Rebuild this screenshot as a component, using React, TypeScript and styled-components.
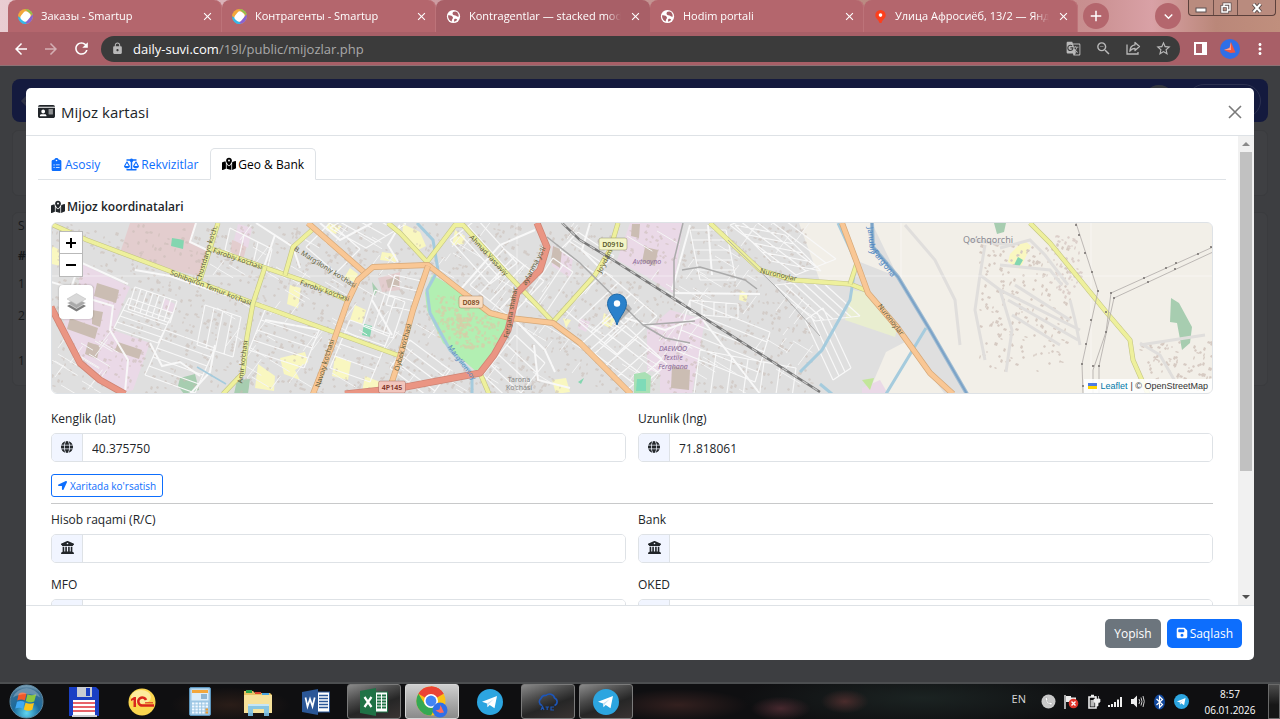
import React, { ReactNode, useId } from "react";
import styled, { createGlobalStyle, css } from "styled-components";
import {
  FaIdCard,
  FaClipboardList,
  FaScaleBalanced,
  FaMapLocationDot,
  FaGlobe,
  FaBuildingColumns,
  FaFloppyDisk,
} from "react-icons/fa6";
import { FaLocationArrow } from "react-icons/fa";
import {
  MdArrowBack,
  MdArrowForward,
  MdRefresh,
  MdLock,
  MdGTranslate,
  MdZoomOut,
  MdStarBorder,
  MdMoreVert,
  MdClose,
  MdAdd,
  MdKeyboardArrowDown,
} from "react-icons/md";

const GlobalStyle = createGlobalStyle`
  *, *::before, *::after { box-sizing: border-box; }
  body { margin: 0; background: #3d3e41; font-family: "Open Sans", "Noto Sans", sans-serif; font-size: 12px; color: #212529; }
  button, input { font: inherit; }
`;

const Screen = styled.div`
  display: flex;
  flex-direction: column;
  height: 100vh;
  overflow: hidden;
`;

/* ---------- browser frame ---------- */

const TabStrip = styled.div`
  display: flex;
  height: 32px;
  padding-left: 8px;
  background: linear-gradient(90deg, #e9cdd2 0, #cf9fa6 30%, #b98a80 70%, #c98f90 85%, #d9a1a6 90%, #ba8779 95%, #c08f7d 100%);
`;

const TabItem = styled.div<{ $active?: boolean }>`
  display: flex;
  align-items: center;
  flex: 0 1 214px;
  min-width: 0;
  gap: 8px;
  padding: 0 8px 0 10px;
  border-radius: 8px 8px 0 0;
  color: #fff;
  background: ${(p) => (p.$active ? "#a85f67" : "#b4666d")};
  box-shadow: ${(p) => (p.$active ? "none" : "inset -1px 0 0 #bd7379")};
`;

const TabTitle = styled.span`
  flex: 1;
  overflow: hidden;
  white-space: nowrap;
  font-size: 11px;
  line-height: 16px;
  mask-image: linear-gradient(90deg, #000 90%, transparent);
`;

const PlainButton = styled.button`
  display: inline-flex;
  align-items: center;
  justify-content: center;
  padding: 0;
  border: 0;
  color: inherit;
  background: none;
`;

const RoundButton = styled(PlainButton)`
  align-self: center;
  width: 26px;
  height: 26px;
  margin-left: 5px;
  border-radius: 50%;
  color: #fff;
  background: #b4666d;
`;

const StripSpacer = styled.div`
  flex: 1;
`;

const WindowButtons = styled.div`
  display: flex;
  align-self: flex-start;
  height: 16px;
  margin: 0 4px 0 7px;
  border: 1px solid #5c413c;
  border-top: 0;
  border-radius: 0 0 4px 4px;
  background: #b98b7e;
`;

const WindowButton = styled(PlainButton)<{ $wide?: boolean }>`
  width: ${(p) => (p.$wide ? 38 : 24)}px;
  & + & { border-left: 1px solid #6e4f49; }
`;

const Toolbar = styled.div`
  display: flex;
  align-items: center;
  flex: none;
  height: 34px;
  padding: 0 10px;
  border-bottom: 1px solid #8d7275;
  color: #fff;
  background: #a85f67;
`;

const NavButton = styled(PlainButton)<{ $dim?: boolean }>`
  width: 22px;
  height: 26px;
  margin-right: 8px;
  opacity: ${(p) => (p.$dim ? 0.5 : 1)};
`;

const AddressBar = styled.div`
  display: flex;
  align-items: center;
  flex: 1;
  height: 26px;
  margin-left: 1px;
  padding: 0 8px 0 10px;
  border-radius: 13px;
  color: #b9b9b9;
  background: #3b3b3b;
`;

const Address = styled.p`
  flex: 1;
  margin: 0 0 0 9px;
  font-size: 13px;
  color: #a9a9a9;
  b { font-weight: 400; color: #fff; }
`;

const BarIcon = styled(PlainButton)`
  width: 18px;
  margin-left: 12px;
`;

const ToolIcon = styled(PlainButton)`
  width: 20px;
  margin-left: 10px;
`;

/* ---------- page behind the dialog ---------- */

const Viewport = styled.main`
  position: relative;
  flex: 1;
  min-height: 0;
  padding: 13px 12px;
  overflow: hidden;
  background: #3d3e41;
`;

const DimNavbar = styled.div`
  display: flex;
  align-items: center;
  height: 43px;
  padding: 0 7px;
  margin-bottom: 8px;
  border-radius: 8px;
  color: #2f3246;
  background: #141a3e;
`;

const DimAvatar = styled.span`
  width: 32px;
  height: 32px;
  margin-right: 12px;
  border-radius: 50%;
  background: #34373f;
`;

const DimPill = styled.span`
  width: 74px;
  height: 34px;
  border: 1px solid #2c3150;
  border-radius: 17px;
`;

const DimPanel = styled.div<{ $height: number }>`
  height: ${(p) => p.$height}px;
  margin-bottom: 16px;
  border: 1px solid #3a3b3e;
  border-radius: 6px;
  background: #3f4043;
`;

const DimRows = styled.div`
  display: grid;
  grid-template-rows: 24px 36px 20px 44px 46px;
  align-items: center;
  padding: 0 5px;
  color: #17191b;
`;

const Overlay = styled.div`
  position: absolute;
  inset: 0;
  display: flex;
  padding: 22px 26px;
`;

/* ---------- dialog ---------- */

const Dialog = styled.section`
  display: flex;
  flex-direction: column;
  flex: 1;
  min-width: 0;
  border-radius: 5px;
  background: #fff;
  overflow: hidden;
`;

const DialogHeader = styled.header`
  display: flex;
  align-items: center;
  flex: none;
  gap: 6px;
  height: 48px;
  padding: 0 11px 0 12px;
  border-bottom: 1px solid #dee2e6;
`;

const DialogTitle = styled.h1`
  flex: 1;
  margin: 0;
  font-size: 15px;
  font-weight: 400;
`;

const DialogMain = styled.div`
  display: flex;
  flex: 1;
  min-height: 0;
`;

const DialogBody = styled.div`
  flex: 1;
  min-width: 0;
  padding: 12px;
  overflow-y: auto;
  scrollbar-width: none;
`;

const ScrollTrack = styled.div`
  display: flex;
  flex-direction: column;
  align-items: center;
  width: 16px;
  background: #f1f1f1;
  color: #505050;
`;

const ScrollThumb = styled.div`
  width: 12px;
  height: 68%;
  background: #c1c1c1;
`;

const ScrollArrow = styled.svg`
  flex: none;
  width: 16px;
  height: 16px;
`;

const FormTabs = styled.nav`
  display: flex;
  height: 32px;
  border-bottom: 1px solid #dee2e6;
`;

const FormTab = styled.a<{ $active?: boolean }>`
  display: flex;
  align-items: center;
  gap: 2px;
  height: 32px;
  padding: 0 11px;
  border: 1px solid transparent;
  border-radius: 5px 5px 0 0;
  color: #0d6efd;
  text-decoration: none;
  ${(p) =>
    p.$active &&
    css`
      color: #000;
      background: #fff;
      border-color: #dee2e6 #dee2e6 #fff;
    `}
`;

const Pane = styled.div`
  padding: 17px 13px;
`;

const SectionTitle = styled.h2`
  display: flex;
  align-items: center;
  gap: 2px;
  margin: 0 0 5px;
  font-size: 12px;
  line-height: 20px;
  font-weight: 600;
`;

const MapFrame = styled.div`
  position: relative;
  height: 172px;
  margin-bottom: 15px;
  border: 1px solid #dee2e6;
  border-radius: 6px;
  overflow: hidden;
`;

const MapSvg = styled.svg`
  display: block;
  width: 100%;
  height: 100%;
`;

const MapControls = styled.div`
  position: absolute;
  top: 8px;
  left: 7px;
  display: flex;
  flex-direction: column;
  align-items: flex-start;
`;

const ZoomButton = styled.button`
  width: 24px;
  height: 23px;
  padding: 0;
  border: 1px solid #b9b9b9;
  color: #000;
  background: #fff;
  display: flex;
  align-items: center;
  justify-content: center;
  & + & { border-top: 0; }
`;

const LayersButton = styled.button`
  display: flex;
  align-items: center;
  justify-content: center;
  width: 34px;
  height: 34px;
  margin-top: 8px;
  padding: 0;
  border: 0;
  border-radius: 4px;
  background: #fff;
  box-shadow: 0 0 2px rgba(0, 0, 0, 0.3);
`;

const Attribution = styled.div`
  position: absolute;
  right: 0;
  bottom: 0;
  display: flex;
  align-items: center;
  gap: 3px;
  height: 14px;
  padding: 0 4px;
  font-family: "Liberation Sans", Arial, sans-serif;
  font-size: 9px;
  color: #333;
  background: rgba(255, 255, 255, 0.85);
  a { color: #0078a8; text-decoration: none; }
`;

const FieldGrid = styled.div`
  display: grid;
  grid-template-columns: 1fr 1fr;
  gap: 12px;
`;

const FieldLabel = styled.label`
  display: block;
  margin-bottom: 4px;
  line-height: 20px;
`;

const InputGroup = styled.div`
  display: flex;
  height: 29px;
  border: 1px solid #dee2e6;
  border-radius: 5px;
  overflow: hidden;
`;

const Addon = styled.span`
  display: flex;
  align-items: center;
  justify-content: center;
  width: 31px;
  padding-bottom: 2px;
  border-right: 1px solid #dee2e6;
  background: #f1f5ff;
`;

const TextInput = styled.input`
  flex: 1;
  min-width: 0;
  padding: 1px 9px 0;
  border: 0;
  outline: 0;
  color: #212529;
`;

const OutlineButton = styled.button`
  display: flex;
  align-items: center;
  gap: 3px;
  height: 23px;
  margin-top: 12px;
  padding: 0 6px;
  border: 1px solid #0d6efd;
  border-radius: 3px;
  font-size: 10px;
  color: #0d6efd;
  background: #fff;
`;

const Divider = styled.hr`
  height: 1px;
  margin: 6px 0;
  border: 0;
  background: #c8c9ca;
`;

const DialogFooter = styled.footer`
  display: flex;
  align-items: center;
  justify-content: flex-end;
  flex: none;
  gap: 6px;
  height: 55px;
  padding: 0 12px;
  border-top: 1px solid #dee2e6;
`;

const SolidButton = styled.button<{ $primary?: boolean }>`
  display: flex;
  align-items: center;
  gap: 2px;
  height: 29px;
  padding: 0 9px;
  border: 0;
  border-radius: 5px;
  color: #fff;
  background: ${(p) => (p.$primary ? "#0d6efd" : "#6c757d")};
`;

/* ---------- taskbar ---------- */

const Taskbar = styled.footer`
  display: flex;
  align-items: stretch;
  flex: none;
  height: 37px;
  border-top: 2px solid #4c4e50;
  color: #fff;
  background: radial-gradient(ellipse 60px 18px at 18% 60%, #2a1d18, transparent),
    radial-gradient(ellipse 70px 16px at 53% 60%, #33201f, transparent),
    radial-gradient(ellipse 30px 12px at 61% 70%, #46282e, transparent),
    radial-gradient(ellipse 24px 12px at 66% 50%, #4a2c2c, transparent),
    radial-gradient(ellipse 180px 30px at 72% 40%, #1b2322, transparent),
    #0f0f11;
`;

const StartButton = styled(PlainButton)`
  width: 53px;
`;

const TaskSlot = styled(PlainButton)<{ $look?: "open" | "front" }>`
  width: 54px;
  margin-left: 4px;
  border-radius: 3px;
  ${(p) =>
    p.$look === "open" &&
    css`
      border: 1px solid #7b7b7b;
      background: linear-gradient(160deg, #8a8a8a 0, #4b4b4b 35%, #262626 60%, #3a3433 100%);
    `}
  ${(p) =>
    p.$look === "front" &&
    css`
      border: 1px solid #d6d6d6;
      background: linear-gradient(180deg, #cfcfcf, #a5a5a5 60%, #8a8a8a);
    `}
`;

const Tray = styled.div`
  display: flex;
  align-items: center;
  gap: 7px;
`;

const Language = styled.span`
  margin: 0 8px 6px 0;
  font-size: 11px;
  color: #d8d8d8;
`;

const Clock = styled.time`
  width: 60px;
  margin: 0 8px 0 4px;
  text-align: center;
  font-size: 10px;
  line-height: 16px;
`;

const ShowDesktop = styled(PlainButton)`
  width: 12px;
  border: 1px solid #6a6a6a;
  background: linear-gradient(180deg, #4d4d4d, #161616 60%);
`;

/* ---------- small drawings ---------- */

const SmartupIcon = () => {
  const id = useId();
  return (
    <svg width="15" height="15" viewBox="0 0 15 15">
      <clipPath id={id}><circle cx="7.500" cy="7.500" r="7.500" /></clipPath>
      <g clipPath={`url(#${id})`}>
        <rect width="15" height="15" fill="#f3a73b" />
        <path d="M7 0H15V7Z" fill="#8cc152" />
        <path d="M15 5V15H5Z" fill="#8a63d0" />
        <path d="M0 7L8 15H0Z" fill="#2c9fe0" />
        <path d="M0 9L3 8L9 15H2Z" fill="#39b7e8" />
        <rect x="3.500" y="2.500" width="8" height="10" rx="3" fill="#fff" transform="rotate(38 7.500 7.500)" />
      </g>
    </svg>
  );
};

const WorldIcon = () => (
  <svg width="15" height="15" viewBox="0 0 15 15">
    <circle cx="7.500" cy="7.500" r="6.600" fill="#fff" />
    <path d="M2 6.500C4 6 6.500 7 7 8.500C7.300 9.700 5.500 10 5.800 12.600C3.600 12 2 9.500 2 6.500ZM7 3C8 2.400 10 2 11.300 3.300C12 4.500 12.800 5.500 12.700 7.400C11.500 8.300 10.700 6.600 9.300 6.400C8 6.200 6.400 5.600 6.500 4.400ZM8.200 10.200C9.400 9.600 10.600 9.800 11.200 10.700C10.400 11.900 9.200 12.400 8 12.500Z" fill="#a85f67" />
  </svg>
);

const PinIcon = () => (
  <svg width="13" height="15" viewBox="0 0 13 15">
    <path d="M6.500 1a5.200 5.200 0 0 1 5.200 5.200c0 3-3 3.500-4.200 7.800h-2C4.300 9.700 1.300 9.200 1.300 6.200A5.200 5.200 0 0 1 6.500 1Z" fill="#fc3f1d" />
    <circle cx="6.500" cy="6.100" r="1.800" fill="#fff" />
  </svg>
);

const ShareIcon = () => (
  <svg width="16" height="15" viewBox="0 0 16 15" fill="none" stroke="currentColor" strokeWidth="1.300">
    <path d="M2 3.500V13H13V11" />
    <path d="M10 1.500L14.500 5.500L10 9.500V7.300C7.500 7.300 6 8.300 4.800 10.200C5 6.600 6.800 4.200 10 3.800Z" strokeLinejoin="round" />
  </svg>
);

const ProfileIcon = () => (
  <svg width="20" height="20" viewBox="0 0 20 20">
    <circle cx="10" cy="10" r="10" fill="#2f6fe8" />
    <path d="M11 3L15.500 13.500L10.500 14L4 11L9.500 9Z" fill="#f0563f" />
    <path d="M11 3L11 11L4 11L9.500 9Z" fill="#ffa08f" />
  </svg>
);

const TelegramIcon = ({ size }: { size: number }) => (
  <svg width={size} height={size} viewBox="0 0 26 26">
    <circle cx="13" cy="13" r="13" fill="#2ca5e0" />
    <path d="M5 12.800L20 7L17.500 19.300L12.700 15.900L10.500 18.200L10 14.500Z" fill="#fff" />
    <path d="M10 14.500L16.800 10L11.700 15.200L10.500 18.200Z" fill="#c3dff0" />
  </svg>
);

const StartIcon = () => {
  const id = useId();
  return (
    <svg width="35" height="35" viewBox="0 0 36 36">
      <radialGradient id={id} cx="0.500" cy="0.850" r="0.900">
        <stop offset="0" stopColor="#5fd6f2" />
        <stop offset="0.450" stopColor="#1c6a9c" />
        <stop offset="0.800" stopColor="#3c6f92" />
        <stop offset="1" stopColor="#a8c3d2" />
      </radialGradient>
      <circle cx="18" cy="18" r="17" fill={`url(#${id})`} stroke="#5f8aa3" />
      <path d="M10 10C13 8 15.500 8.500 18 10L16.300 17C14 15.600 11.300 15.300 8.500 17Z" fill="#f0592a" />
      <path d="M19 10.500C22 12 24.500 12 28 10.500L26 18C23 19.300 20.300 19 17.300 17.600Z" fill="#8cc63f" />
      <path d="M8.200 18.300C11 17 13.500 17 16 18.600L14.300 25.500C12 24 9.500 24 6.500 25.300Z" fill="#3fa9f5" />
      <path d="M17 19.200C20 20.500 22.700 20.700 25.700 19.500L24 26.500C21 28 18.300 27.700 15.200 26.200Z" fill="#fcc419" />
      <path d="M4 14A15 15 0 0 1 32 14C25 9 11 9 4 14Z" fill="#fff" opacity="0.250" />
    </svg>
  );
};

const FloppyIcon = () => (
  <svg width="30" height="31" viewBox="0 0 30 31">
    <path d="M0 1H27L30 4V30H0Z" fill="#1a3fc4" />
    <path d="M8 1H23V11H8Z" fill="#c9ccd2" />
    <path d="M17 2H21V10H17Z" fill="#1a3fc4" />
    <rect x="4" y="14" width="22" height="16" fill="#fff" />
    <path d="M4 17H26M4 21H26M4 25H26" stroke="#e0303a" strokeWidth="1.300" />
    <rect x="3" y="29" width="25" height="2" fill="#c9ccd2" />
  </svg>
);

const OneCIcon = () => (
  <svg width="28" height="28" viewBox="0 0 28 28">
    <circle cx="14" cy="14" r="13.500" fill="#fbd64f" />
    <ellipse cx="13" cy="9" rx="10" ry="7" fill="#fdeb9c" />
    <path d="M3 11L6 9H8V19H5.500V12L3 13Z" fill="#d9261c" />
    <path d="M18 12A4 4 0 1 0 15 17.500H26" fill="none" stroke="#d9261c" strokeWidth="2.600" />
    <path d="M17 14.800H25" stroke="#d9261c" strokeWidth="1" />
  </svg>
);

const CalculatorIcon = () => (
  <svg width="22" height="29" viewBox="0 0 22 29">
    <rect x="0.500" y="0.500" width="21" height="28" rx="1.500" fill="#9cc6e4" stroke="#5c95bd" />
    <rect x="2.500" y="2.500" width="17" height="11" fill="#dceefa" />
    <rect x="3" y="3" width="16" height="3" fill="#f3a73b" />
    <rect x="12" y="7" width="6" height="5" fill="#8fb6d2" />
    {[0, 1, 2, 3].map((r) =>
      [0, 1, 2, 3, 4].map((c) => (
        <rect key={`${r}${c}`} x={3 + c * 3.4} y={15.500 + r * 3} width="2.400" height="2" fill={c === 4 && r > 1 ? "#f39c2b" : "#f2f9ff"} />
      )),
    )}
  </svg>
);

const ExplorerIcon = () => (
  <svg width="30" height="28" viewBox="0 0 30 28">
    <path d="M1 3H10L12 5H27L29 7V25H1Z" fill="#e8c363" />
    <path d="M3 2H9V5H3Z" fill="#2fa24b" />
    <path d="M12 4H18V6H12Z" fill="#d9432f" />
    <path d="M19 5H26V8H19Z" fill="#4aa3df" />
    <path d="M1 7H29V25H1Z" fill="#f7e29b" />
    <path d="M5 16H26V28H21V21H10V28H5Z" fill="#7cc3ea" opacity="0.900" />
    <path d="M5 16H26V18H5Z" fill="#c6e6f7" />
  </svg>
);

const WordIcon = () => (
  <svg width="28" height="26" viewBox="0 0 28 26">
    <rect x="15" y="3" width="12.500" height="20" fill="#fff" stroke="#2b5797" />
    <path d="M17 6.500H26M17 9.500H26M17 12.500H26M17 15.500H26M17 18.500H26" stroke="#2b5797" strokeWidth="1.300" />
    <path d="M0 3L16 0V26L0 23Z" fill="#2b5797" />
    <path d="M3.500 8.500L5.500 17.500L8 10L10.500 17.500L12.700 8.500" fill="none" stroke="#fff" strokeWidth="1.700" />
  </svg>
);

const ExcelIcon = () => (
  <svg width="28" height="28" viewBox="0 0 28 28">
    <rect x="15" y="4" width="12.500" height="20" fill="#fff" stroke="#1f7246" />
    <path d="M17 7.500H26M17 10.500H26M17 13.500H26M17 16.500H26M17 19.500H26" stroke="#1f7246" strokeWidth="2" strokeDasharray="4 1" />
    <path d="M0 3L16 0V28L0 25Z" fill="#1f7246" />
    <path d="M4.500 9L11.500 19M11.500 9L4.500 19" fill="none" stroke="#fff" strokeWidth="2.200" />
  </svg>
);

const ChromeIcon = () => (
  <svg width="32" height="32" viewBox="0 0 32 32">
    <circle cx="15" cy="15" r="14.500" fill="#fbc116" />
    <path d="M15 15L2.400 7.700A14.500 14.500 0 0 1 27.600 7.700Z" fill="#ea4335" />
    <path d="M15 .5A14.500 14.500 0 0 1 27.600 8H15Z" fill="#ea4335" />
    <path d="M2.400 7.700A14.500 14.500 0 0 0 15 29.500L21 18.500L9 18.500Z" fill="#34a853" />
    <circle cx="15" cy="15" r="7" fill="#fff" />
    <circle cx="15" cy="15" r="5.400" fill="#4285f4" />
    <circle cx="24" cy="24" r="7.500" fill="#2f6fe8" />
    <path d="M24.500 19L28 26.500L24 27L19.500 24.500L23.500 23.500Z" fill="#ff6b5a" />
  </svg>
);

const CloudIcon = () => (
  <svg width="22" height="18" viewBox="0 0 22 18" fill="none" stroke="#1d56b8" strokeWidth="1.600">
    <path d="M5 12.500A4 4 0 0 1 4 5.500A4.500 4.500 0 0 1 9 2.500A5 5 0 0 1 17.500 5A4 4 0 0 1 17.500 12.500" />
    <path d="M4 17L5.500 13.500L7 17M8.500 14H12M10.200 14V17M17 14H14V17H17" strokeWidth="1.200" />
  </svg>
);

const PhoneTray = () => (
  <svg width="15" height="15" viewBox="0 0 15 15">
    <circle cx="7.500" cy="7.500" r="7" fill="#c9c9c9" />
    <path d="M4.500 3.500C3.500 6.500 7 11 10.500 11L11.500 9.500L9.500 8.300L8.600 9C7.300 8.500 6.300 7.300 6 6.200L6.800 5.400L5.800 3.300Z" fill="#fff" stroke="#999" strokeWidth="0.500" />
  </svg>
);

const FlagTray = () => (
  <svg width="16" height="15" viewBox="0 0 16 15">
    <path d="M2 1V15" stroke="#eee" strokeWidth="1.400" />
    <path d="M3 2H8V3.500H13V9H8V8H3Z" fill="#eee" />
    <circle cx="10.500" cy="9.500" r="4.800" fill="#e0352b" />
    <path d="M8.500 7.500L12.500 11.500M12.500 7.500L8.500 11.500" stroke="#fff" strokeWidth="1.400" />
  </svg>
);

const BatteryTray = () => (
  <svg width="15" height="15" viewBox="0 0 15 15">
    <path d="M3 3H10V14H3ZM5 1.500H8" fill="none" stroke="#eee" strokeWidth="1.600" />
    <path d="M4.500 6H8.500V12.500H4.500Z" fill="#bbb" />
    <path d="M9.500 2V5M12.500 2V5M8 5H14V8L12 9V12H10V9L8 8Z" fill="#eee" stroke="#eee" strokeWidth="0.700" />
  </svg>
);

const SignalTray = () => (
  <svg width="15" height="15" viewBox="0 0 15 15" fill="#eee">
    <path d="M0 11H2V13H0ZM3 10H5V13H3ZM6 8H8V13H6ZM9 5.500H11V13H9ZM12 3H14V13H12Z" />
  </svg>
);

const VolumeTray = () => (
  <svg width="15" height="15" viewBox="0 0 15 15">
    <path d="M1 5H3.500L7 1.500V13.500L3.500 10H1Z" fill="#eee" />
    <path d="M9 5Q10.500 7.500 9 10M11 3.500Q13 7.500 11 11.500M13 2Q15.500 7.500 13 13" fill="none" stroke="#ccc" />
  </svg>
);

const BluetoothTray = () => (
  <svg width="15" height="16" viewBox="0 0 15 16">
    <ellipse cx="7.500" cy="8" rx="5.500" ry="7.500" fill="#10479c" />
    <path d="M4.500 5L10.500 10.500L7.500 13.500V2.500L10.500 5.500L4.500 11" fill="none" stroke="#fff" strokeWidth="1.200" />
  </svg>
);

const LayersIcon = () => (
  <svg width="21" height="21" viewBox="0 0 21 21">
    <path d="M1 14L10.500 19.500L20 14L10.500 9Z" fill="#7d7d7d" />
    <path d="M1 11L10.500 16.500L20 11L10.500 6Z" fill="#a9a9a9" stroke="#fff" strokeWidth="0.500" />
    <path d="M1 7L10.500 12.500L20 7L10.500 1.500Z" fill="#d9d9d9" stroke="#bbb" strokeWidth="0.500" />
  </svg>
);

/* ---------- city map ---------- */

const random = (seed: number) => () => {
  seed = (seed * 16807) % 2147483647;
  return seed / 2147483647;
};

const houses = (seed: number, count: number, x: number, y: number, w: number, h: number) => {
  const next = random(seed);
  let d = "";
  for (let i = 0; i < count; i++) {
    const px = Math.round(x + next() * w);
    const py = Math.round(y + next() * h);
    const a = 1 + Math.round(next() * 2);
    const b = 1 + Math.round(next() * 2);
    d += `M${px} ${py}l${a} 1l-1 ${b}l-${a} -1z`;
  }
  return d;
};

/* Short lanes that follow the two main street directions. */
const lanes = (seed: number, count: number, x: number, y: number, w: number, h: number) => {
  const next = random(seed);
  let d = "";
  for (let i = 0; i < count; i++) {
    const px = Math.round(x + next() * w);
    const py = Math.round(y + next() * h);
    const n = 8 + next() * 18;
    d += next() > 0.5 ? `M${px} ${py}l${n} ${n * 0.6}` : `M${px} ${py}l${n * 0.6} ${-n * 0.8}`;
  }
  return d;
};

/* A block of parallel streets: start point, street vector, step vector, number of streets. */
const block = (x: number, y: number, ux: number, uy: number, sx: number, sy: number, n: number) => {
  let d = "";
  for (let i = 0; i < n; i++) d += `M${x + i * sx} ${y + i * sy}l${ux} ${uy}`;
  return d + `M${x} ${y}l${sx * (n - 1)} ${sy * (n - 1)}M${x + ux} ${y + uy}l${sx * (n - 1)} ${sy * (n - 1)}`;
};

const streets = [
  block(135, 287, -7, 22, 6, 2, 8),
  block(114, 328, 44, 15, 3, -6, 6),
  block(165, 330, 50, 18, -4, 9, 6),
  block(205, 305, -8, 40, 9, 3, 5),
  block(230, 228, -5, 22, 14, 7, 4),
  block(330, 223, 30, 26, -12, 12, 3),
  block(265, 310, 55, 18, -4, 10, 5),
  block(330, 228, 36, 20, 10, -6, 5),
  block(350, 320, 40, 14, -5, 12, 5),
  block(375, 290, -12, 36, 10, 4, 4),
  block(450, 240, 40, 44, 9, -7, 4),
  block(470, 285, 34, -36, 10, 8, 5),
  block(515, 335, 30, 28, -8, 10, 5),
  block(525, 300, 28, -42, 10, 7, 3),
  block(565, 310, 40, -38, 13, 11, 5),
  block(580, 345, 34, -30, 12, 11, 5),
  block(560, 250, 36, 24, 9, -9, 3),
  block(590, 350, 50, 38, 9, -8, 4),
  block(690, 300, 80, 32, -3, 10, 6),
  block(700, 350, -6, 44, 16, 3, 7),
  block(730, 225, 66, 50, 10, -4, 5),
  block(735, 225, 50, 10, 9, 9, 5),
  block(690, 230, 36, 0, 2, 10, 6),
  block(775, 285, 40, 36, 9, -1, 6),
  block(805, 320, 28, 60, 6, -4, 4),
  block(690, 300, 0, 14, 12, 1, 5),
  block(410, 340, 40, 30, -5, 7, 5),
  block(395, 275, 26, 6, -3, 10, 4),
].join("");

const ruralRoads =
  "M905 225L935 260L955 300L960 345M985 245L980 275L1000 290L1012 330L1006 372M1000 248L1030 240L1045 255L1068 285M1000 290L1080 330M1008 300L1078 340M1015 285L1070 320M1012 315L1060 345M980 275L975 310L985 360M1000 265L1050 270L1062 285M1140 343L1160 355L1180 390M1140 345L1205 335M1080 345L1075 320L1070 300M970 240L1010 245";

const poly = (fill: string, ...points: string[]) => points.map((p) => <polygon key={p} points={p} fill={fill} />);

const Road = ({ d, kind }: { d: string; kind: "yellow" | "orange" | "red" }) => {
  const look = {
    yellow: ["#c4c584", "#eef09c", 5, 3.800],
    orange: ["#d6a878", "#f9c795", 6, 4.600],
    red: ["#cf8474", "#ea9583", 7, 5.400],
  }[kind] as [string, string, number, number];
  return (
    <g fill="none" strokeLinejoin="round">
      <path d={d} stroke={look[0]} strokeWidth={look[2]} />
      <path d={d} stroke={look[1]} strokeWidth={look[3]} />
    </g>
  );
};

const MapLabel = styled.text<{ $size?: number }>`
  font-family: "Noto Sans", "Open Sans", sans-serif;
  font-size: ${(p) => p.$size ?? 7}px;
  text-anchor: middle;
`;

const labels: { text: string; x: number; y: number; turn?: number; fill?: string; size?: number; italic?: boolean }[] = [
  { text: "Sohibqiron Temur ko‘chasi", x: 210, y: 290, turn: 21 },
  { text: "Farobiy ko‘chasi", x: 237, y: 261, turn: 19 },
  { text: "Farobiy ko‘chasi", x: 324, y: 293, turn: 19 },
  { text: "B. Marg‘iloniy ko‘chasi", x: 324, y: 269, turn: 32 },
  { text: "Chustdaryo ko‘ch.", x: 209, y: 254, turn: -73 },
  { text: "Ahmad Yassaviy", x: 487, y: 257, turn: 47 },
  { text: "Fergana shahar", x: 513, y: 313, turn: -80 },
  { text: "aylanma yo‘li", x: 536, y: 267, turn: -62 },
  { text: "Oybek ko‘chasi", x: 405, y: 348, turn: -75 },
  { text: "Navoiy ko‘chasi", x: 327, y: 364, turn: -73 },
  { text: "Amir ko‘chasi", x: 245, y: 362, turn: -83 },
  { text: "Jo‘ydam", x: 607, y: 262, turn: -63 },
  { text: "Nuronoylar", x: 778, y: 277, turn: 13 },
  { text: "Nuronoylar", x: 889, y: 321, turn: 52 },
  { text: "Avtooyno", x: 647, y: 264, fill: "#8a6a9a", italic: true },
  { text: "DAEWOO", x: 673, y: 351, fill: "#8a6a9a", italic: true },
  { text: "Textile", x: 673, y: 360, fill: "#8a6a9a", italic: true },
  { text: "Ferghana", x: 673, y: 369, fill: "#8a6a9a", italic: true },
  { text: "Tarona", x: 519, y: 382, fill: "#888" },
  { text: "Ko‘chasi", x: 519, y: 390, fill: "#888" },
  { text: "Marg‘ilonsoy", x: 460, y: 364, turn: 53, fill: "#5c8bc0" },
  { text: "Janubiy", x: 869, y: 241, turn: 84, fill: "#4f86c2", size: 8 },
  { text: "Farg‘ona", x: 882, y: 265, turn: 52, fill: "#4f86c2", size: 8 },
  { text: "Qo‘chqorchi", x: 988, y: 243, fill: "#8b8b93", size: 9 },
];

const Shield = ({ x, y, w, text, fill, ink }: { x: number; y: number; w: number; text: string; fill: string; ink: string }) => (
  <g>
    <rect x={x - w / 2} y={y - 6} width={w} height="12" rx="2" fill={fill} stroke={ink} strokeOpacity="0.300" />
    <MapLabel x={x} y={y + 3} fill={ink} fontWeight="600">{text}</MapLabel>
  </g>
);

const pylons: [number, number][] = [
  [1076, 225], [1079, 235], [1085, 253], [1092, 272], [1098, 291], [1091, 320], [1086, 344], [1082, 364], [1083, 386],
  [1211, 247], [1198, 254], [1176, 263], [1166, 268], [1144, 278], [1148, 282], [1111, 293], [1114, 298], [1106, 312],
  [1106, 332], [1099, 366], [1093, 366], [1175, 269],
];

const CityMap = () => (
  <MapSvg viewBox="51 223 1162 170" preserveAspectRatio="xMidYMid slice" role="img" aria-label="Mijoz koordinatalari">
    <rect x="0" y="200" width="1300" height="220" fill="#dfdfdf" />
    {poly("#f2efe8", "799,223 842,223 857,263 853,282 820,281", "872,223 1300,223 1300,400 967,394 930,330 898,277", "842,223 872,223 873,247 898,277 860,262", "886,352 905,342 945,394 868,394")}
    {poly("#e3cdce", "130,223 196,223 191,243 207,250 201,277 158,266 121,250", "232,240 247,245 243,260 230,255", "378,278 400,272 400,290 382,292")}
    {poly("#ead9e7", "80,263 130,287 123,303 113,330 150,343 133,390 125,392 97,383 67,337 62,308 78,300", "630,223 683,223 673,293 647,277 617,260", "647,330 670,310 705,320 692,394 660,394 660,373 647,370", "552,245 573,258 570,278 552,266", "238,224 252,228 248,248 234,240", "580,318 590,322 586,332 578,328", "164,298 175,304 172,314 163,309", "862,388 880,380 888,394 862,394")}
    {poly("#e9eed0", "853,290 868,293 897,330 895,337 845,320")}
    {poly("#f9f7c0", "52,246 60,250 60,266 52,264", "290,285 301,288 298,308 287,304", "328,223 342,226 336,234 326,230", "350,268 358,274 354,282 344,278", "355,305 366,310 362,324 350,320", "280,358 305,352 308,362 295,370 300,380 284,374", "258,364 275,376 274,391 255,388", "335,356 351,362 348,380 332,376", "382,252 396,254 396,262 380,260", "403,224 420,232 426,246 418,250 402,238", "455,230 465,236 464,244 452,245", "552,380 566,378 570,392 556,394", "604,313 616,320 610,328 602,324", "1010,254 1024,240 1031,246 1020,269 1008,262", "365,376 380,382 378,394 362,392", "740,290 748,294 746,302 739,300", "563,318 571,320 566,328")}
    {poly("#83d6b0", "172,238 184,240 183,249 171,246", "364,324 372,326 370,337 362,335", "1018,257 1023,260 1019,267 1014,265", "578,382 584,378 581,384")}
    {poly("#a7cdb0", "180,378 195,374 199,390 184,394 178,386", "237,380 250,379 248,394 234,394", "1171,298 1179,303 1192,327 1190,343 1182,350 1177,323 1170,322", "994,223 1006,223 1004,232 997,234", "372,282 378,290 374,296")}
    <path d="M862 380L874 378L870 390Z" fill="#c2e69a" />
    <path d={houses(11, 2000, 51, 223, 760, 171)} fill="#c9bbb4" opacity="0.550" />
    <path d={houses(5, 200, 980, 240, 90, 130)} fill="#d6cac2" />
    <path d={houses(9, 90, 1140, 340, 72, 50)} fill="#d6cac2" />
    <path d={houses(21, 60, 1050, 235, 30, 60)} fill="#dccfca" />
    {poly("#cbbdb3", "97,283 119,290 116,303 94,296", "70,318 98,328 95,339 67,329", "88,342 100,346 97,359 85,354", "118,342 142,350 139,359 115,351", "92,310 103,312 100,327 92,324", "645,247 658,250 655,266 642,262", "672,366 690,370 689,390 671,388", "553,246 562,250 560,268 551,262", "632,224 640,224 639,238 631,236", "386,280 399,276 399,286 388,288")}
    <path d={lanes(17, 190, 210, 225, 590, 165)} fill="none" stroke="#f4f4f4" />
    <path d={lanes(41, 22, 52, 340, 50, 50)} fill="none" stroke="#f4f4f4" />
    <path d={streets} fill="none" stroke="#f8f8f8" strokeWidth="1.200" />
    <g fill="none" stroke="#f8f8f8" strokeWidth="2">
      <path d="M51 282L71 288L80 262L128 284M60 290L113 306L110 330L128 360L125 392M135 270L170 276L240 300" />
      <path d="M256 223L293 247L300 268M196 223L190 242L207 250M275 235L264 267M150 343L162 366L180 362L200 376M215 345L210 372L190 394" />
      <path d="M534 345L538 380L570 388M590 223L582 250L600 268M673 293L760 294M703 320L760 394M625 318L665 330L705 315" />
      <path d="M400 225L388 245L398 262M320 223L340 240L372 223M265 320L320 330M372 300L392 335" />
      <path d="M460 290L500 245L535 230M515 320L545 350L555 372M690 225L672 290M708 225L712 275" />
    </g>
    {poly("#b2efb2", "432,275 450,285 490,315 507,320 503,337 478,373 443,343 427,310 425,293")}
    <path d={houses(31, 120, 436, 295, 34, 42)} fill="#dcc9a6" opacity="0.700" />
    <path d={houses(37, 110, 456, 312, 42, 34)} fill="#dcc9a6" opacity="0.700" />
    {poly("#a9e0b4", "634,374 645,372 651,376 650,394 634,394")}
    {poly("#7edbb8", "637,379 646,379 646,391 636,391")}
    <path d={ruralRoads} fill="none" stroke="#e0dedc" strokeWidth="3" />
    <path d="M517 223V394M901 223V278M1091 223V394M51 276H1213" stroke="#fff" strokeOpacity="0.450" fill="none" />
    <g fill="none" stroke="#a5cbdd">
      <path d="M417 223L433 240L438 270L427 290L430 313L450 350L472 373L472 394" strokeWidth="3" />
      <path d="M838 223L856 262L850 300L840 318L822 350L800 372" strokeWidth="3" />
      <path d="M926 328L886 394M820 384L832 394" strokeWidth="3" />
      <path d="M197 367L226 384" strokeWidth="1.500" />
      <path d="M872 223L873 247L898 277L930 330L967 394" strokeWidth="4" stroke="#a3bed3" />
      <path d="M872 223L873 247L898 277L930 330L967 394" strokeWidth="2" stroke="#7ba3c8" />
    </g>
    <Road kind="yellow" d="M51 224L87 240L167 270L253 303L400 356" />
    <Road kind="yellow" d="M210 248L263 267L310 283L347 300" />
    <Road kind="yellow" d="M218 223L208 255L200 280" />
    <Road kind="yellow" d="M265 267L253 303L247 337L243 373L223 394" />
    <Road kind="yellow" d="M312 230L293 247L285 275" />
    <Road kind="yellow" d="M388 223L400 233L427 262L455 225L463 225L510 277L553 322" />
    <Road kind="yellow" d="M553 322L595 275L610 250L618 223" />
    <Road kind="yellow" d="M480 373L489 394" />
    <Road kind="yellow" d="M710 223L745 256L760 270L793 280L850 284L868 291" />
    <Road kind="yellow" d="M850 284L857 263" />
    <Road kind="yellow" d="M1030 223L1050 243L1107 313L1130 340L1133 360L1148 394" />
    <Road kind="orange" d="M308 223L365 273" />
    <Road kind="orange" d="M313 394L333 343L347 303L358 280L373 267L428 265L460 290L490 313L510 318L553 323L580 343L631 394" />
    <Road kind="orange" d="M428 266L413 310L400 357L388 394" />
    <Road kind="orange" d="M842 223L857 263L868 293L897 327L930 373L953 394" />
    <Road kind="red" d="M537 223L547 247L540 270L517 293L508 330L494 355L480 373L400 388L345 394" />
    <Road kind="red" d="M51 307L80 363L100 380L125 394" />
    <g fill="none">
      <path d="M547 237L580 263L643 325L670 323L695 321M683 223L674 260L674 297M682 270L700 267L745 280L757 289M643 325L665 338L690 343" stroke="#aaa" strokeWidth="1.500" />
      <path d="M562 223L580 240L613 260L820 392" stroke="#777" strokeWidth="2.400" />
      <path d="M562 223L580 240L613 260L820 392" stroke="#c9c9c9" strokeWidth="1.200" strokeDasharray="6 6" />
      <path d="M728 240L775 286L820 336" stroke="#999" strokeWidth="0.700" />
      <path d="M1076 223L1098 291L1082 364L1083 394M1213 247L1111 293L1106 332L1093 370V394M1213 252L1114 298L1099 366V394" stroke="#aeaaa7" strokeWidth="0.800" />
    </g>
    {pylons.map(([x, y]) => <circle key={`${x}-${y}`} cx={x} cy={y} r="1.100" fill="#7a7572" />)}
    {labels.map((l) => (
      <MapLabel
        key={`${l.text}${l.x}`}
        x={l.x}
        y={l.y}
        $size={l.size}
        fill={l.fill ?? "#5f5f40"}
        transform={l.turn ? `rotate(${l.turn} ${l.x} ${l.y})` : undefined}
        fontStyle={l.italic ? "italic" : "normal"}
      >
        {l.text}
      </MapLabel>
    ))}
    <Shield x={613} y={244} w={28} text="D091b" fill="#f3f4c6" ink="#5a5a2a" />
    <Shield x={471} y={302} w={24} text="D089" fill="#f8dcc0" ink="#7a4a20" />
    <Shield x={392} y={387} w={27} text="4P145" fill="#f2c6bd" ink="#7c2f22" />
    <path d="M618 323L632 309L628 304L620 312Z" fill="#000" opacity="0.200" />
    <path d="M617 325C615 317 607.500 311 607.500 303.500A9.500 9.500 0 0 1 626.500 303.500C626.500 311 619 317 617 325Z" fill="#2a81cb" stroke="#1f6aa8" />
    <circle cx="617" cy="303.500" r="3.200" fill="#fff" />
  </MapSvg>
);

/* ---------- form pieces ---------- */

const Field = ({ label, icon, value }: { label: string; icon: ReactNode; value?: string }) => {
  const id = useId();
  return (
    <div>
      <FieldLabel htmlFor={id}>{label}</FieldLabel>
      <InputGroup>
        <Addon>{icon}</Addon>
        <TextInput id={id} type="text" defaultValue={value} />
      </InputGroup>
    </div>
  );
};

const BrowserTab = ({ icon, title, active }: { icon: ReactNode; title: string; active?: boolean }) => (
  <TabItem $active={active}>
    {icon}
    <TabTitle>{title}</TabTitle>
    <PlainButton aria-label="Close tab"><MdClose size={13} /></PlainButton>
  </TabItem>
);

export default function App() {
  return (
    <Screen>
      <GlobalStyle />
      <TabStrip>
        <BrowserTab icon={<SmartupIcon />} title="Заказы - Smartup" />
        <BrowserTab icon={<SmartupIcon />} title="Контрагенты - Smartup" />
        <BrowserTab icon={<WorldIcon />} title="Kontragentlar — stacked moda" active />
        <BrowserTab icon={<WorldIcon />} title="Hodim portali" />
        <BrowserTab icon={<PinIcon />} title="Улица Афросиёб, 13/2 — Янд" />
        <RoundButton aria-label="New tab"><MdAdd size={18} /></RoundButton>
        <StripSpacer />
        <RoundButton aria-label="Search tabs"><MdKeyboardArrowDown size={17} /></RoundButton>
        <WindowButtons>
          <WindowButton aria-label="Minimize">
            <svg width="12" height="10"><rect x="1" y="5" width="10" height="4" fill="#fff" stroke="#5c5050" /></svg>
          </WindowButton>
          <WindowButton aria-label="Restore">
            <svg width="12" height="12" fill="none" stroke="#5c5050" strokeWidth="3">
              <path d="M4 4V2H10V8H8M2 4.500H7.500V10H2Z" />
              <path d="M4 4V2H10V8H8M2 4.500H7.500V10H2Z" stroke="#fff" strokeWidth="1.500" />
            </svg>
          </WindowButton>
          <WindowButton $wide aria-label="Close">
            <svg width="12" height="10" fill="none">
              <path d="M2.500 1L9.500 9M9.500 1L2.500 9" stroke="#5c5050" strokeWidth="4" />
              <path d="M2.500 1L9.500 9M9.500 1L2.500 9" stroke="#fff" strokeWidth="2" />
            </svg>
          </WindowButton>
        </WindowButtons>
      </TabStrip>
      <Toolbar>
        <NavButton aria-label="Back"><MdArrowBack size={18} /></NavButton>
        <NavButton $dim aria-label="Forward"><MdArrowForward size={18} /></NavButton>
        <NavButton aria-label="Reload"><MdRefresh size={19} /></NavButton>
        <AddressBar>
          <MdLock size={13} />
          <Address><b>daily-suvi.com</b>/19l/public/mijozlar.php</Address>
          <BarIcon aria-label="Translate"><MdGTranslate size={15} /></BarIcon>
          <BarIcon aria-label="Zoom"><MdZoomOut size={17} /></BarIcon>
          <BarIcon aria-label="Share"><ShareIcon /></BarIcon>
          <BarIcon aria-label="Bookmark"><MdStarBorder size={17} /></BarIcon>
        </AddressBar>
        <ToolIcon aria-label="Side panel">
          <svg width="13" height="13"><path d="M0 0H13V13H0ZM2 2V11H8V2Z" fill="#fff" fillRule="evenodd" /></svg>
        </ToolIcon>
        <ToolIcon aria-label="Profile"><ProfileIcon /></ToolIcon>
        <ToolIcon aria-label="Menu"><MdMoreVert size={18} /></ToolIcon>
      </Toolbar>

      <Viewport>
        <DimNavbar>
          <svg width="12" height="14" aria-hidden="true"><path d="M9 2L4 7L9 12" stroke="currentColor" strokeWidth="3" fill="none" /></svg>
          <StripSpacer />
          <DimAvatar />
          <DimPill />
        </DimNavbar>
        <DimPanel $height={66} />
        <DimPanel $height={174}>
          <DimRows>
            <span>S</span>
            <b>#</b>
            <span>1</span>
            <span>2</span>
            <span>1</span>
          </DimRows>
        </DimPanel>

        <Overlay>
          <Dialog role="dialog" aria-labelledby="dialog-title">
            <DialogHeader>
              <FaIdCard size={17} />
              <DialogTitle id="dialog-title">Mijoz kartasi</DialogTitle>
              <PlainButton aria-label="Yopish">
                <svg width="16" height="16" viewBox="0 0 16 16"><path d="M2 2L14 14M14 2L2 14" stroke="#7a7a7a" strokeWidth="1.600" /></svg>
              </PlainButton>
            </DialogHeader>
            <DialogMain>
              <DialogBody>
                <FormTabs>
                  <FormTab href="#asosiy"><FaClipboardList size={13} />Asosiy</FormTab>
                  <FormTab href="#rekvizitlar"><FaScaleBalanced size={15} />Rekvizitlar</FormTab>
                  <FormTab href="#geo" $active><FaMapLocationDot size={14} />Geo &amp; Bank</FormTab>
                </FormTabs>
                <Pane>
                  <SectionTitle><FaMapLocationDot size={14} />Mijoz koordinatalari</SectionTitle>
                  <MapFrame>
                    <CityMap />
                    <MapControls>
                      <ZoomButton aria-label="Zoom in">
                        <svg width="12" height="12"><path d="M6 1V11M1 6H11" stroke="#000" strokeWidth="2" /></svg>
                      </ZoomButton>
                      <ZoomButton aria-label="Zoom out">
                        <svg width="12" height="12"><path d="M1 6H11" stroke="#000" strokeWidth="2" /></svg>
                      </ZoomButton>
                      <LayersButton aria-label="Layers"><LayersIcon /></LayersButton>
                    </MapControls>
                    <Attribution>
                      <svg width="9" height="6"><rect width="9" height="3" fill="#4c7be1" /><rect y="3" width="9" height="3" fill="#ffd500" /></svg>
                      <a href="#leaflet">Leaflet</a>
                      <span>| © OpenStreetMap</span>
                    </Attribution>
                  </MapFrame>
                  <FieldGrid>
                    <Field label="Kenglik (lat)" icon={<FaGlobe size={12} />} value="40.375750" />
                    <Field label="Uzunlik (lng)" icon={<FaGlobe size={12} />} value="71.818061" />
                  </FieldGrid>
                  <OutlineButton><FaLocationArrow size={9} />Xaritada ko'rsatish</OutlineButton>
                  <Divider />
                  <FieldGrid>
                    <Field label="Hisob raqami (R/C)" icon={<FaBuildingColumns size={13} />} />
                    <Field label="Bank" icon={<FaBuildingColumns size={13} />} />
                    <Field label="MFO" icon={<FaBuildingColumns size={13} />} />
                    <Field label="OKED" icon={<FaBuildingColumns size={13} />} />
                  </FieldGrid>
                </Pane>
              </DialogBody>
              <ScrollTrack>
                <ScrollArrow><path d="M4 10L8 6L12 10Z" fill="#8a8a8a" /></ScrollArrow>
                <ScrollThumb />
                <StripSpacer />
                <ScrollArrow><path d="M4 6L8 10L12 6Z" fill="currentColor" /></ScrollArrow>
              </ScrollTrack>
            </DialogMain>
            <DialogFooter>
              <SolidButton>Yopish</SolidButton>
              <SolidButton $primary><FaFloppyDisk size={12} />Saqlash</SolidButton>
            </DialogFooter>
          </Dialog>
        </Overlay>
      </Viewport>

      <Taskbar>
        <StartButton aria-label="Start"><StartIcon /></StartButton>
        <TaskSlot aria-label="Total Commander"><FloppyIcon /></TaskSlot>
        <TaskSlot aria-label="1C"><OneCIcon /></TaskSlot>
        <TaskSlot aria-label="Calculator"><CalculatorIcon /></TaskSlot>
        <TaskSlot aria-label="Explorer"><ExplorerIcon /></TaskSlot>
        <TaskSlot aria-label="Word"><WordIcon /></TaskSlot>
        <TaskSlot $look="open" aria-label="Excel"><ExcelIcon /></TaskSlot>
        <TaskSlot $look="front" aria-label="Chrome"><ChromeIcon /></TaskSlot>
        <TaskSlot aria-label="Telegram"><TelegramIcon size={26} /></TaskSlot>
        <TaskSlot $look="open" aria-label="ATC"><CloudIcon /></TaskSlot>
        <TaskSlot $look="open" aria-label="Telegram"><TelegramIcon size={26} /></TaskSlot>
        <StripSpacer />
        <Tray>
          <Language>EN</Language>
          <PhoneTray />
          <FlagTray />
          <BatteryTray />
          <SignalTray />
          <VolumeTray />
          <BluetoothTray />
          <TelegramIcon size={15} />
          <Clock>8:57<br />06.01.2026</Clock>
        </Tray>
        <ShowDesktop aria-label="Show desktop" />
      </Taskbar>
    </Screen>
  );
}
